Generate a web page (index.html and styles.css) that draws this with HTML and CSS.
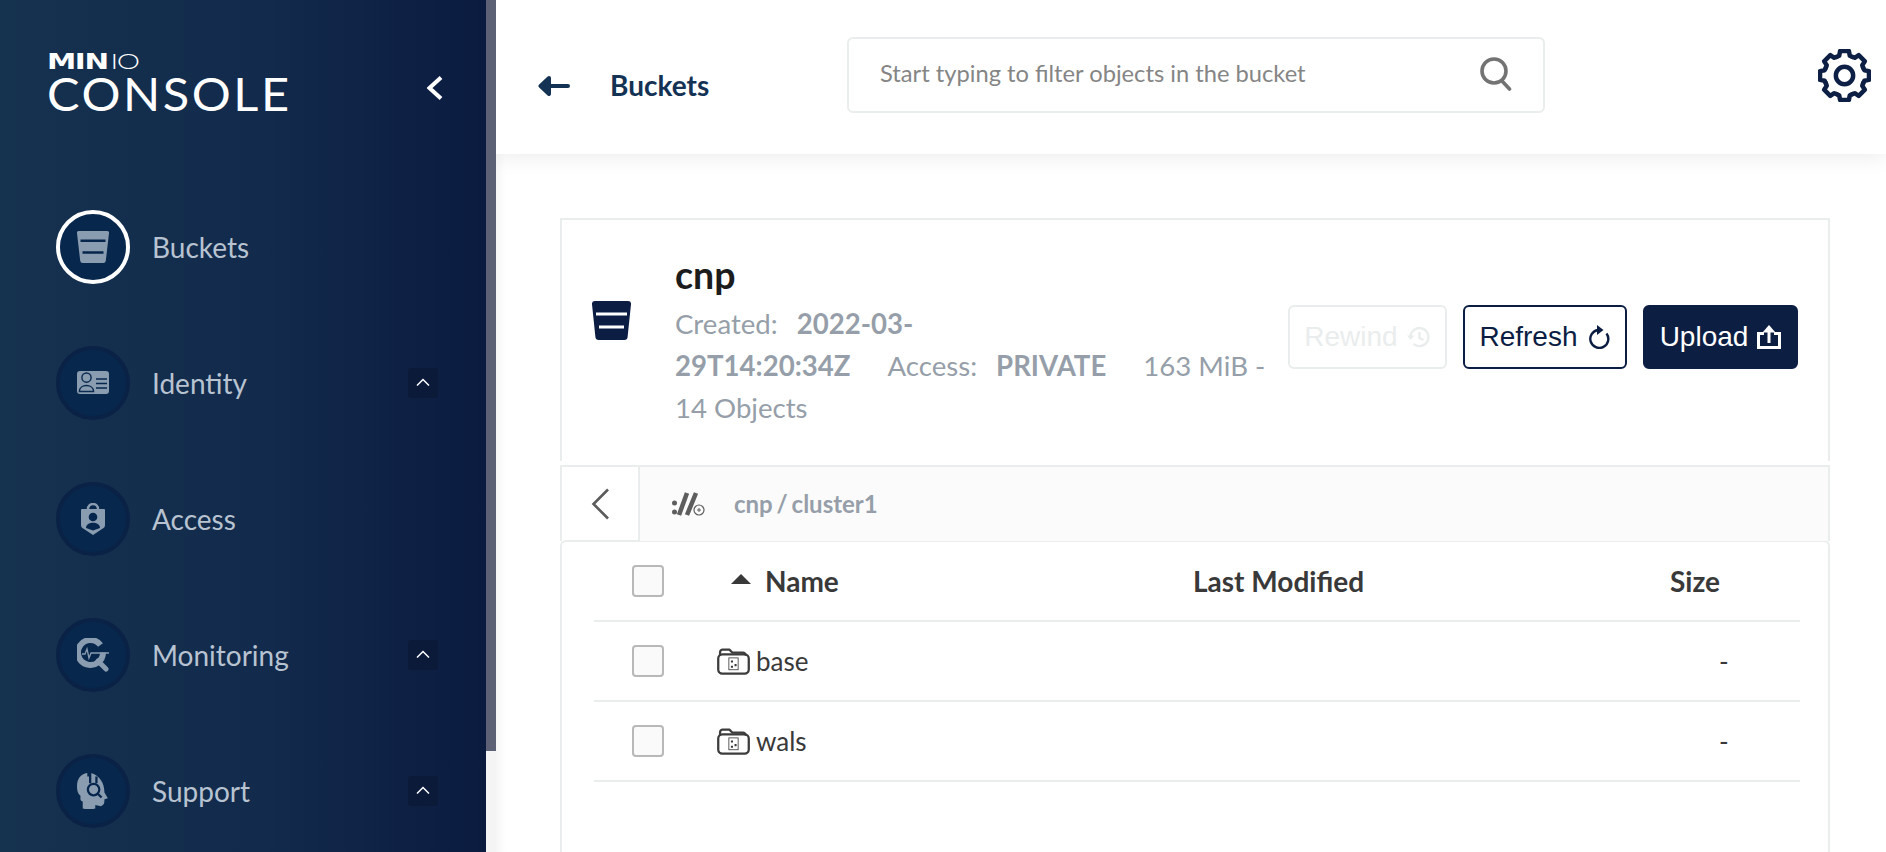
FILE: index.html
```html
<!DOCTYPE html>
<html lang="en">
<head>
<meta charset="utf-8">
<title>MinIO Console</title>
<link rel="stylesheet" href="styles.css">
</head>
<body>
<aside class="sidebar">
  <div class="nav">
    <div class="brand">
      <div class="logo">
        <div class="logo-top"><span class="logo-min">MIN</span><span class="logo-io">IO</span></div>
        <div class="logo-console">CONSOLE</div>
      </div>
      <svg class="collapse" viewBox="0 0 16 24"><path d="M14 1.500 2.500 12 14 22.500" /></svg>
    </div>
    <div class="nav-item">
      <span class="nav-circle active">
        <svg class="nav-icon" viewBox="0 0 32 32"><path class="ic" d="M2 0h28a2 2 0 0 1 2 2.300l-3.200 27.500A2.500 2.500 0 0 1 26.300 32H5.700a2.500 2.500 0 0 1-2.500-2.200L0 2.300A2 2 0 0 1 2 0z"/><path class="ic-cut" d="M3.500 9.800h25M5.500 21.500h21"/></svg>
      </span>
      <span class="nav-label">Buckets</span>
    </div>
    <div class="nav-item">
      <span class="nav-circle">
        <svg class="nav-icon" viewBox="0 0 32 24"><rect class="ic" y="0" width="32" height="23" rx="3"/><circle class="ic ic-ring" cx="9.500" cy="6.600" r="4.600"/><path class="ic ic-ring" d="M2.400 20.500c0-8 14-8 14.200 0z"/><path class="ic-thin" d="M19 8h11M19 12.500h11M19 17h11"/></svg>
      </span>
      <span class="nav-label">Identity</span>
      <span class="expand"><svg viewBox="0 0 14 8"><path d="M1 7.500 7 1.500l6 6"/></svg></span>
    </div>
    <div class="nav-item">
      <span class="nav-circle">
        <svg class="nav-icon" viewBox="0 0 32 32"><path class="handle" d="M11 8V6a5 5 0 0 1 10 0v2"/><path class="ic" d="M5 6h22a1 1 0 0 1 1 1v15c0 2-1 3-3 4l-9 6-9-6c-2-1-3-2-3-4V7a1 1 0 0 1 1-1z"/><circle class="ic-dark" cx="16" cy="14" r="4.300"/><path class="ic-dark" d="M9 25c0-7 14-7 14 0l-7 2.500z"/></svg>
      </span>
      <span class="nav-label">Access</span>
    </div>
    <div class="nav-item">
      <span class="nav-circle">
        <svg class="nav-icon" viewBox="0 0 32 34"><path class="handle handle-thick" d="m21 23 8 8"/><path class="handle handle-ring" d="M26 14.500A12.500 12.500 0 1 1 23.500 7"/><path class="pulse" d="M5 16h3l2-5 2 9 2-5h18"/></svg>
      </span>
      <span class="nav-label">Monitoring</span>
      <span class="expand"><svg viewBox="0 0 14 8"><path d="M1 7.500 7 1.500l6 6"/></svg></span>
    </div>
    <div class="nav-item">
      <span class="nav-circle">
        <svg class="nav-icon" viewBox="0 0 28 32"><path class="ic" d="M9 0C3 1 0 5 0 12c0 4 1 6 3 8v3c0 1 1 2 2 2v6c3 1 8 1 11 0v-3l5 1c3-1 3-3 3-6l3-1-3-5c0-8-4-15-12-17v3l-3 0z"/><path class="cut-line" d="M11.500 0v9M17 3v6"/><circle class="head-ring" cx="14.500" cy="14.500" r="5"/><path class="cut-line" d="m18 18 3.500 3.500"/></svg>
      </span>
      <span class="nav-label">Support</span>
      <span class="expand"><svg viewBox="0 0 14 8"><path d="M1 7.500 7 1.500l6 6"/></svg></span>
    </div>
  </div>
  <div class="scroll-track"><div class="scroll-thumb"></div></div>
</aside>

<main class="main">
  <header class="topbar">
    <svg class="back" viewBox="0 0 32 20"><path d="M11 2 2.500 10 11 18zM8 10h22"/></svg>
    <span class="page-title">Buckets</span>
    <div class="search">
      <span class="placeholder">Start typing to filter objects in the bucket</span>
      <svg class="search-icon" viewBox="0 0 32 34"><circle cx="14" cy="14" r="12"/><path d="m22 24 7.500 8"/></svg>
    </div>
    <svg class="gear" viewBox="-26 -26 52 52">
      <defs><path id="tooth" d="M-8-18.200-5.200-19.400-4.300-24H4.300L5.200-19.400 8-18.200"/></defs>
      <use href="#tooth"/><use href="#tooth" transform="rotate(45)"/><use href="#tooth" transform="rotate(90)"/><use href="#tooth" transform="rotate(135)"/><use href="#tooth" transform="rotate(180)"/><use href="#tooth" transform="rotate(225)"/><use href="#tooth" transform="rotate(270)"/><use href="#tooth" transform="rotate(315)"/>
      <circle r="8.500"/>
    </svg>
  </header>

  <div class="content">
    <section class="bucket-card">
      <svg class="bucket-icon" viewBox="0 0 39 39"><path class="bi-body" d="M3 0h33a3 3 0 0 1 3 3.300l-3.400 32.700a3.300 3.300 0 0 1-3.300 3H6.700a3.300 3.300 0 0 1-3.300-3L0 3.300A3 3 0 0 1 3 0z"/><path class="bi-line" d="M4 13h31M7 26h25"/></svg>
      <div class="bucket-info">
        <h1 class="bucket-name">cnp</h1>
        <p class="bucket-meta"><span class="label">Created:</span><b>2022-03-<br>29T14:20:34Z</b><span class="label">Access:</span><b>PRIVATE</b>163 MiB -<br>14 Objects</p>
      </div>
      <div class="actions">
        <button class="btn btn-disabled">Rewind
          <svg viewBox="0 0 24 24"><path d="M3.500 12a9 9 0 1 1 3 6.800"/><path class="fill" d="M0 10.500h7.500L3.700 15z"/><path d="M12.500 7v6l4 2"/></svg>
        </button>
        <button class="btn btn-outline">Refresh
          <svg viewBox="0 0 24 24"><path d="M19.500 8.500A9 9 0 1 1 11 5"/><path class="fill" d="M10 0l6.500 5-6.500 5z"/></svg>
        </button>
        <button class="btn btn-primary">Upload
          <svg class="thick" viewBox="0 0 24 24"><path d="M7 8.500H1.500v14h21v-14H17M12 18V4"/><path class="fill" d="M12 0l6.500 7.500h-13z"/></svg>
        </button>
      </div>
    </section>

    <nav class="breadcrumb">
      <div class="crumb-back"><svg viewBox="0 0 19 32"><path d="M17 1.500 2.500 16 17 30.500"/></svg></div>
      <div class="crumb-path">
        <svg class="crumb-icon" viewBox="0 0 33 24"><circle class="cdot" cx="2.500" cy="11" r="2.500"/><circle class="cdot" cx="2.500" cy="20" r="2.500"/><path class="cslash" d="M15 1 7 23M24 1 15 23"/><circle class="cring" cx="27" cy="18" r="5"/><path class="cplus" d="M25 18h4M27 16v4"/></svg>
        <span class="crumb-text">cnp / cluster1</span>
      </div>
    </nav>

    <section class="table">
      <div class="row head">
        <span class="check"></span>
        <span class="name-head"><i class="sort"></i>Name</span>
        <span>Last Modified</span>
        <span>Size</span>
      </div>
      <div class="row">
        <span class="check"></span>
        <span class="file"><svg class="folder" viewBox="0 0 32 26"><path d="M3 7V4a2.500 2.500 0 0 1 2.500-2.500H12l3 3h10a3 3 0 0 1 3 3"/><rect x="1.200" y="6" width="29.600" height="18.800" rx="4"/><rect class="thin" x="11.500" y="9.500" width="9" height="11.500"/><path class="dots" d="M13.500 12h2v2h-2zM13.500 17h2v2h-2zM17 15.500h2v2h-2z"/></svg>base</span>
        <span></span>
        <span class="size">-</span>
      </div>
      <div class="row">
        <span class="check"></span>
        <span class="file"><svg class="folder" viewBox="0 0 32 26"><path d="M3 7V4a2.500 2.500 0 0 1 2.500-2.500H12l3 3h10a3 3 0 0 1 3 3"/><rect x="1.200" y="6" width="29.600" height="18.800" rx="4"/><rect class="thin" x="11.500" y="9.500" width="9" height="11.500"/><path class="dots" d="M13.500 12h2v2h-2zM13.500 17h2v2h-2zM17 15.500h2v2h-2z"/></svg>wals</span>
        <span></span>
        <span class="size">-</span>
      </div>
    </section>
  </div>
</main>
</body>
</html>
```
FILE: styles.css
```css
* { box-sizing: border-box; }
html, body { height: 100%; }
body {
  margin: 0;
  display: flex;
  height: 852px;
  overflow: hidden;
  background: #fff;
  font-family: "Lato", sans-serif;
}

/* Sidebar */
.sidebar { flex: 0 0 496px; display: flex; height: 852px; position: relative; z-index: 2; }
.nav {
  flex: 0 0 486px;
  height: 852px;
  overflow: hidden;
  color: #fff;
  background: linear-gradient(90deg, #15324f 0%, #122a4c 55%, #0b1b40 100%);
}
.scroll-track { flex: 0 0 10px; background: #f4f4f4; }
.scroll-thumb { height: 751px; background: #5d6176; }

.brand { height: 179px; display: flex; align-items: flex-start; padding: 50px 43px 0 47px; justify-content: space-between; }
.logo { line-height: 1; }
.logo-top { height: 22px; line-height: 21px; white-space: nowrap; transform: scaleX(1.4); transform-origin: left center; }
.logo-min { font-family: "DejaVu Sans", sans-serif; font-weight: 700; font-size: 21px; letter-spacing: -1px; }
.logo-io { font-weight: 300; font-size: 21px; letter-spacing: -1px; margin-left: 2px; }
.logo-console { font-size: 46px; font-weight: 400; line-height: 42px; letter-spacing: 2.400px; margin-top: 1px; width: 230px; transform: scaleX(1.06); transform-origin: left center; }
.collapse { width: 16px; height: 24px; margin-top: 26px; fill: none; stroke: #fff; stroke-width: 4; }

.nav-item { height: 136px; display: flex; align-items: center; padding-left: 56px; position: relative; }
.nav-circle { width: 74px; height: 74px; flex: none; border-radius: 50%; background: #07274d; border: 4px solid #0a2246; display: flex; align-items: center; justify-content: center; }
.nav-circle.active { border-color: #fff; }
.nav-icon { width: 32px; height: auto; }
.nav-label { margin-left: 22px; margin-top: -1px; font-size: 28px; color: #b8c3d1; flex: 1; }
.ic { fill: #8a9cb0; }
.ic-ring { stroke: #0a2a50; stroke-width: 1.400; }
.ic-cut { fill: none; stroke: #06264d; stroke-width: 2.400; }
.ic-thin { fill: none; stroke: #06264d; stroke-width: 1.500; }
.ic-dark { fill: #06264d; }
.handle { fill: none; stroke: #8a9cb0; stroke-width: 2.400; }
.handle-thick { stroke-width: 5; stroke-linecap: round; }
.handle-ring { stroke-width: 6; }
.pulse { fill: none; stroke: #8a9cb0; stroke-width: 1.300; }
.cut-line { fill: none; stroke: #06264d; stroke-width: 2; }
.head-ring { fill: #8a9cb0; stroke: #06264d; stroke-width: 2; }
.expand { width: 30px; height: 30px; flex: none; margin-right: 48px; border-radius: 3px; background: #0c1a3a; display: flex; align-items: center; justify-content: center; }
.expand svg { width: 14px; height: 8px; margin-top: -2px; fill: none; stroke: #fff; stroke-width: 1.500; }

/* Main */
.main { flex: 1; min-width: 0; height: 852px; display: flex; flex-direction: column; box-shadow: inset 14px 0 12px -12px rgba(0,0,0,.06); }
.topbar {
  flex: 0 0 154px;
  display: flex;
  align-items: center;
  padding-left: 42px;
  background: #fff;
  box-shadow: 0 3px 20px rgba(0,0,0,.08);
  position: relative;
}
.back { width: 32px; height: 20px; margin-top: 18px; fill: #143254; stroke: #143254; stroke-width: 4; stroke-linecap: round; stroke-linejoin: round; }
.page-title { margin-left: 40px; margin-top: 16px; font-size: 28px; font-weight: 700; color: #143254; width: 237px; }
.search { width: 698px; height: 76px; margin-top: -4px; border: 2px solid #eaeded; border-radius: 6px; display: flex; align-items: center; justify-content: space-between; padding: 0 31px 0 31px; background: #fff; }
.placeholder { font-size: 23.700px; color: #858585; margin-top: -4px; }
.search-icon { width: 32px; height: 34px; fill: none; stroke: #737373; stroke-width: 3.600; stroke-linecap: round; margin-top: -3px; }
.gear { width: 53px; height: 53px; margin-left: 273px; margin-top: -4px; fill: none; stroke: #0d1f44; stroke-width: 4.400; stroke-linejoin: round; stroke-linecap: round; }

.content { flex: 1; padding: 64px 56px 0 64px; min-height: 0; overflow: hidden; background: transparent; }

.bucket-card { height: 243px; border: 2px solid #eaeded; border-bottom: 0; display: flex; align-items: flex-start; padding-left: 30px; }
.bucket-icon { width: 39px; height: 39px; flex: none; margin-top: 81px; }
.bi-body { fill: #0c1d43; }
.bi-line { fill: none; stroke: #fff; stroke-width: 2.800; }
.bucket-info { flex: 1; margin-left: 44px; margin-top: 27px; }
.bucket-name { margin: 0; font-size: 37.500px; line-height: 56px; font-weight: 700; color: #1c1c1c; }
.bucket-meta { margin: 0; font-size: 27.600px; line-height: 42px; color: #969fa9; }
.bucket-meta b { font-weight: 700; margin-right: 37px; }
.label { margin-right: 19px; }
.actions { display: flex; gap: 16px; margin-top: 85px; margin-right: 30px; }
.btn { height: 64px; border-radius: 6px; border: 2px solid; font-family: "Liberation Sans", Arial, sans-serif; font-size: 28px; display: flex; align-items: center; justify-content: center; gap: 9px; padding: 0; background: #fff; }
.btn svg { width: 24px; height: 24px; fill: none; stroke: currentColor; stroke-width: 2.400; }
.btn svg.thick { stroke-width: 3; }
.btn .fill { fill: currentColor; stroke: none; }
.btn-disabled { width: 159px; color: #eaeded; border-color: #eaeded; }
.btn-outline { width: 164px; color: #0c1d43; border-color: #0c1d43; }
.btn-primary { width: 155px; color: #fff; background: #0d1e43; border-color: #0d1e43; }

.breadcrumb { height: 76px; margin-top: 4px; border: 2px solid #eaeded; border-bottom: 0; display: flex; }
.crumb-back { flex: 0 0 78px; border-right: 2px solid #eaeded; display: flex; align-items: center; padding-left: 29px; }
.crumb-back svg { width: 19px; height: 32px; fill: none; stroke: #5c5c5c; stroke-width: 2.600; }
.crumb-path { flex: 1; background: #fbfbfb; display: flex; align-items: center; padding-left: 32px; }
.crumb-icon { width: 33px; height: 24px; }
.cdot { fill: #5e5e5e; }
.cslash { fill: none; stroke: #5e5e5e; stroke-width: 4.500; }
.cring { fill: #fbfbfb; stroke: #5e5e5e; stroke-width: 1.200; }
.cplus { stroke: #5e5e5e; stroke-width: 1; }
.crumb-text { margin-left: 29px; margin-top: -2px; font-size: 24px; word-spacing: -2px; font-weight: 700; color: #969fa9; }

.table { height: 320px; border: 2px solid #eaeded; border-bottom: 0; border-radius: 6px 6px 0 0; padding: 0 28px 0 32px; margin-top: -1px; }
.row { height: 80px; display: grid; grid-template-columns: 85px 476px 477px 1fr; align-items: center; padding-left: 38px; border-bottom: 2px solid #eaeded; font-size: 26px; color: #393939; }
.head { height: 80px; font-size: 28px; font-weight: 700; }
.check { width: 32px; height: 32px; border: 2px solid #b8b8b8; border-radius: 4px; background: #fbfafa; margin-top: -1px; }
.name-head { display: flex; align-items: center; padding-left: 14px; }
.sort { width: 0; height: 0; border-left: 10px solid transparent; border-right: 10px solid transparent; border-bottom: 10px solid #393939; margin-right: 14px; margin-top: -4px; }
.file { display: flex; align-items: center; gap: 6px; }
.folder { width: 33px; height: 27px; fill: none; stroke: #3c3c3c; stroke-width: 2.200; }
.folder .thin { stroke-width: .8; }
.folder .dots { fill: #3c3c3c; stroke: none; }
.size { padding-left: 49px; }
```
